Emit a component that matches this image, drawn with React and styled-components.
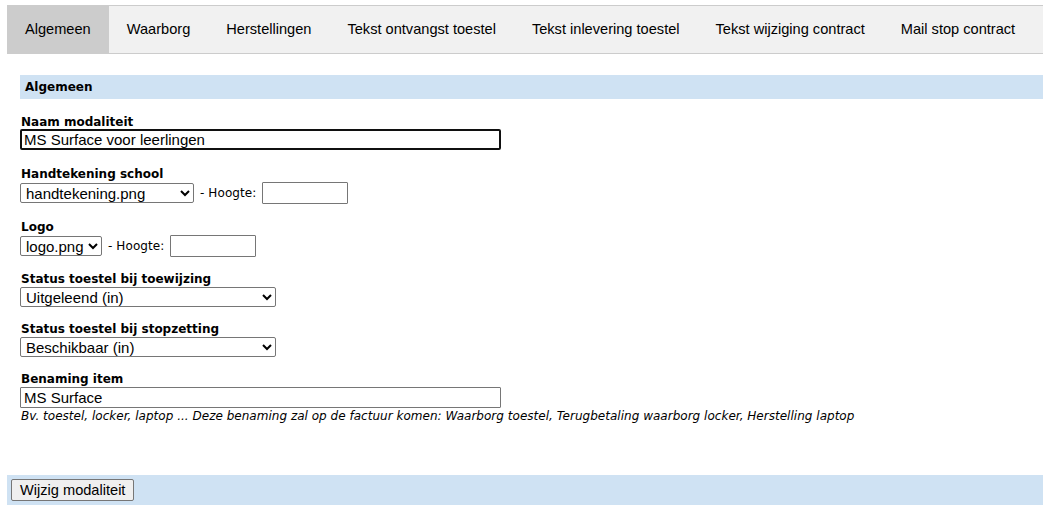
import React from 'react'
import styled, { createGlobalStyle } from 'styled-components'

const GlobalStyle = createGlobalStyle`
  body {
    margin: 0;
    background: #fff;
    font-family: "DejaVu Sans", Verdana, sans-serif;
    color: #000;
  }
`

const Page = styled.div`
  padding: 5px 0 0 7px;
  width: 1036px;
  overflow: hidden;
`

const TabBar = styled.div`
  display: flex;
  background: #f1f1f1;
  border-top: 1px solid #ccc;
  border-bottom: 1px solid #ccc;
  width: 1040px;
`

const Tab = styled.div`
  padding: 0 18px;
  height: 47px;
  display: flex;
  align-items: center;
  padding-bottom: 1px;
  box-sizing: border-box;
  font-family: "Liberation Sans", Arial, sans-serif;
  font-size: 14.6px;
  color: #000;
  background: ${p => (p.$active ? '#ccc' : 'transparent')};
  white-space: nowrap;
`

const Form = styled.div`
  padding: 21px 0 0 13px;
`

const SectionHead = styled.div`
  background: #cfe2f3;
  height: 24px;
  display: flex;
  align-items: center;
  padding-left: 5px;
  font-size: 12px;
  font-weight: bold;
`

const Fields = styled.div`
  padding-top: 15px;
`

const Group = styled.div`
  margin-bottom: ${p => p.$gap || 15}px;
`

const Label = styled.div`
  font-size: 12px;
  font-weight: bold;
  line-height: 16px;
  padding-left: 1px;
`

const Row = styled.div`
  display: flex;
  align-items: center;
`

const TextInput = styled.input`
  box-sizing: border-box;
  width: ${p => p.$w}px;
  height: ${p => p.$h || 21}px;
  margin: ${p => (p.$focus ? '-1px 0 1px' : '0')};
  padding: 0 3px;
  font-family: "Liberation Sans", Arial, sans-serif;
  font-size: 15px;
  color: #000;
  border: ${p => (p.$focus ? '2px solid #101010' : '1px solid #767676')};
  border-radius: ${p => (p.$focus ? '2px' : '1px')};
  outline: none;
  padding-left: ${p => (p.$focus ? '2px' : '3px')};
`

const Select = styled.select`
  box-sizing: border-box;
  width: ${p => p.$w}px;
  height: 20px;
  margin: 0;
  padding: 0 0 0 1px;
  font-family: "Liberation Sans", Arial, sans-serif;
  font-size: 15px;
  color: #000;
  background: #fff;
  border: 1px solid #767676;
  border-radius: 2px;
`

const Small = styled.span`
  font-size: 12px;
  letter-spacing: 0.1px;
  line-height: 22px;
  padding: 0 5px 0 6px;
  white-space: pre;
`

const Help = styled.div`
  font-size: 12px;
  letter-spacing: 0.02px;
  font-style: italic;
  line-height: 16px;
  padding-left: 1px;
`

const BottomBar = styled.div`
  margin: 51px 0 0 -13px;
  background: #cfe2f3;
  height: 30px;
  display: flex;
  align-items: center;
  padding-left: 4px;
`

const Button = styled.button`
  height: 22px;
  padding: 0 8px;
  margin: 0;
  font-family: "Liberation Sans", Arial, sans-serif;
  font-size: 14.6px;
  color: #000;
  background: #efefef;
  border: 1px solid #767676;
  border-radius: 2px;
`

const tabs = [
  'Algemeen',
  'Waarborg',
  'Herstellingen',
  'Tekst ontvangst toestel',
  'Tekst inlevering toestel',
  'Tekst wijziging contract',
  'Mail stop contract',
]

function HeightField({ selectWidth, value }) {
  return (
    <Row>
      <Select $w={selectWidth} defaultValue={value}>
        <option>{value}</option>
      </Select>
      <Small>- Hoogte:</Small>
      <TextInput $w={86} $h={22} />
    </Row>
  )
}

export default function App() {
  return (
    <>
      <GlobalStyle />
      <Page>
        <TabBar>
          {tabs.map((t, i) => (
            <Tab key={t} $active={i === 0}>{t}</Tab>
          ))}
        </TabBar>
        <Form>
          <SectionHead>Algemeen</SectionHead>
          <Fields>
            <Group>
              <Label>Naam modaliteit</Label>
              <TextInput $w={481} $focus defaultValue="MS Surface voor leerlingen" />
            </Group>
            <Group>
              <Label>Handtekening school</Label>
              <HeightField selectWidth={174} value="handtekening.png" />
            </Group>
            <Group $gap={14}>
              <Label>Logo</Label>
              <HeightField selectWidth={82} value="logo.png" />
            </Group>
            <Group $gap={14}>
              <Label>Status toestel bij toewijzing</Label>
              <Select $w={256} defaultValue="Uitgeleend (in)">
                <option>Uitgeleend (in)</option>
              </Select>
            </Group>
            <Group $gap={14}>
              <Label>Status toestel bij stopzetting</Label>
              <Select $w={256} defaultValue="Beschikbaar (in)">
                <option>Beschikbaar (in)</option>
              </Select>
            </Group>
            <div>
              <Label>Benaming item</Label>
              <TextInput $w={481} defaultValue="MS Surface" />
              <Help>Bv. toestel, locker, laptop ... Deze benaming zal op de factuur komen: Waarborg toestel, Terugbetaling waarborg locker, Herstelling laptop</Help>
            </div>
          </Fields>
          <BottomBar>
            <Button>Wijzig modaliteit</Button>
          </BottomBar>
        </Form>
      </Page>
    </>
  )
}
